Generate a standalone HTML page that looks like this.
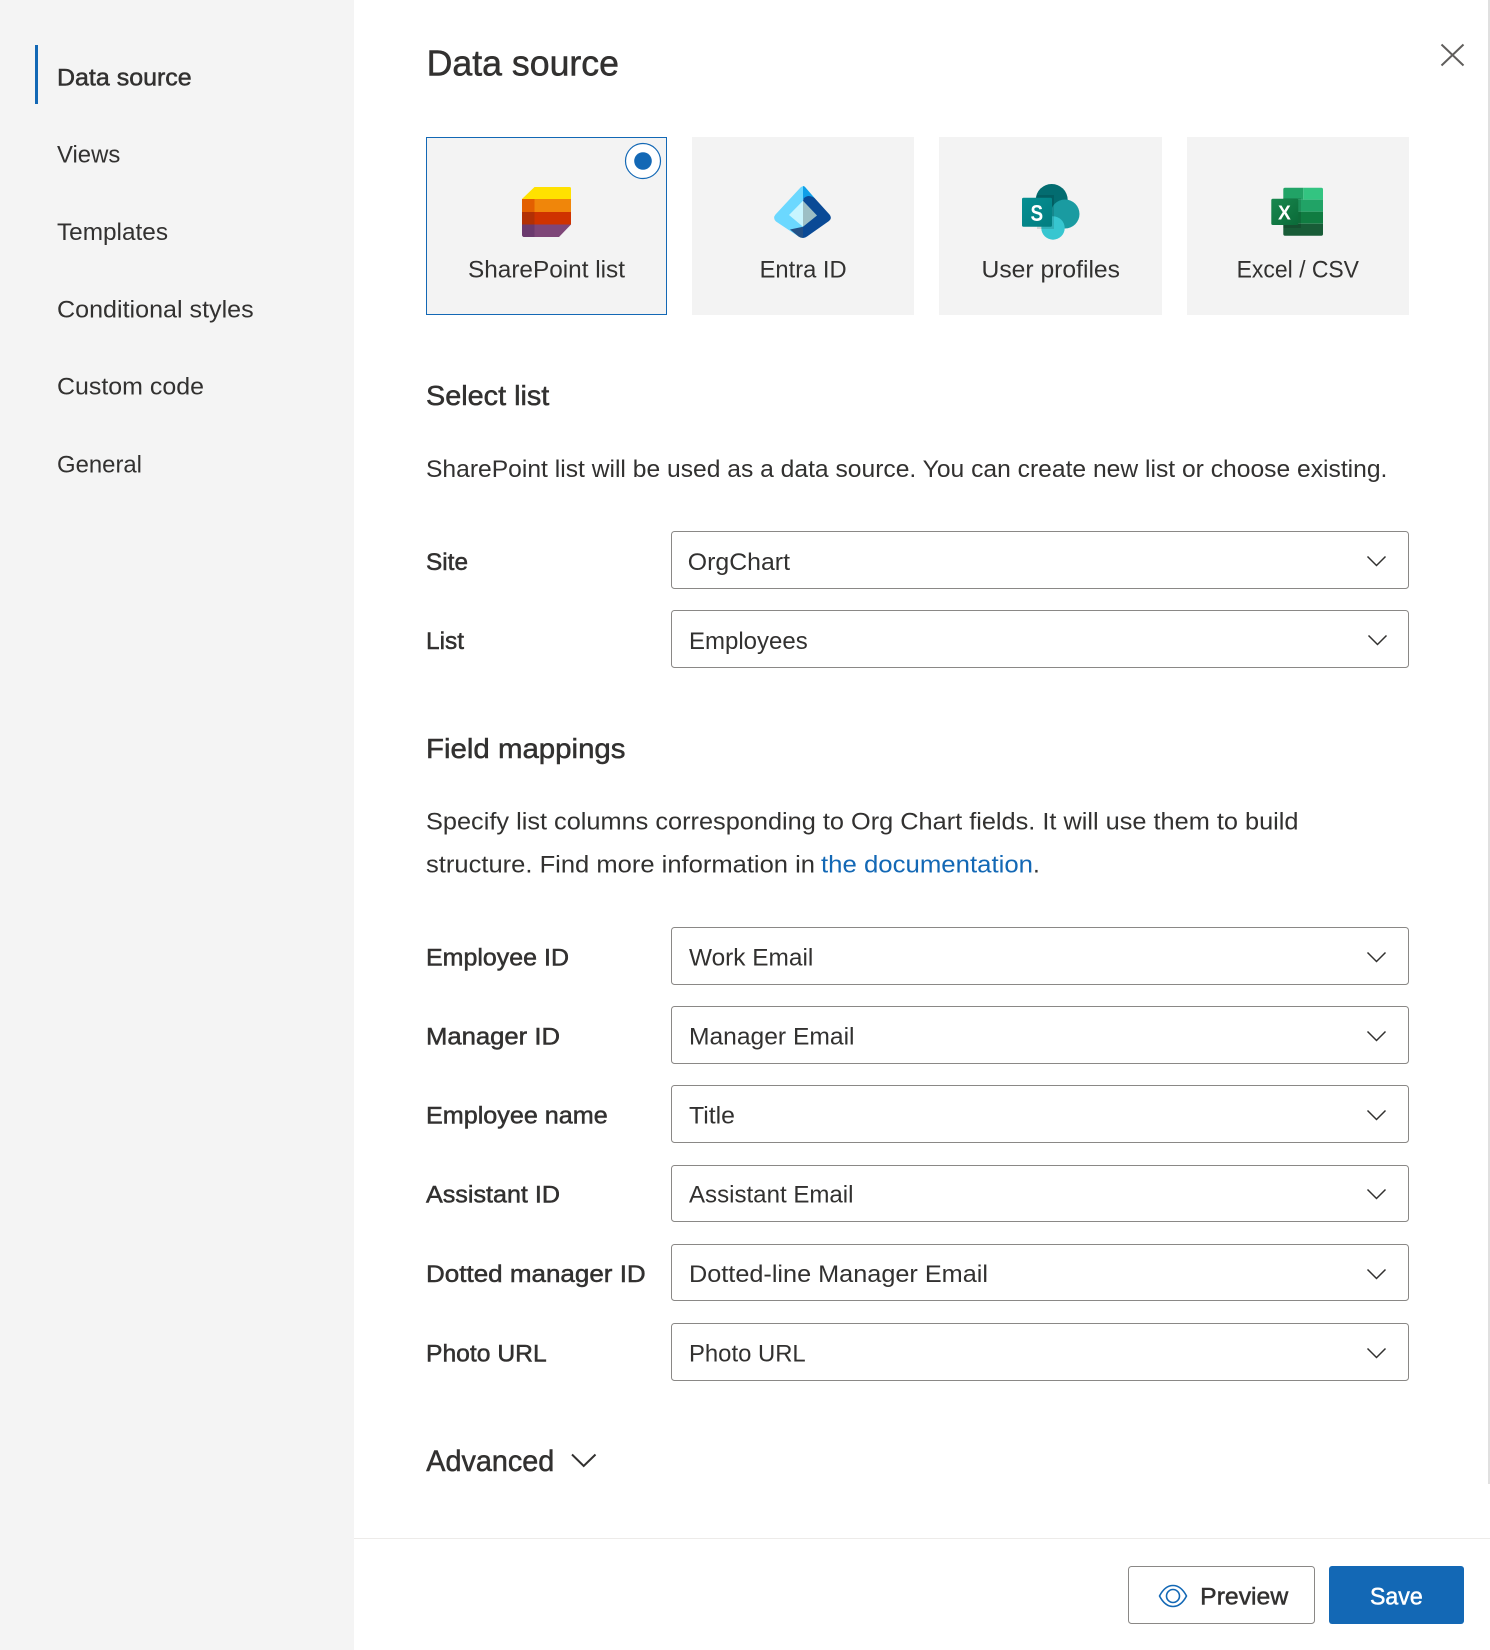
<!DOCTYPE html>
<html><head><meta charset="utf-8"><title>Data source</title>
<style>
html,body{margin:0;padding:0;background:#fff;width:1490px;height:1650px;overflow:hidden}
svg{display:block}
text{font-family:"Liberation Sans",Arial,sans-serif;fill:#323130;font-size:24.5px}
.s{stroke:#323130;stroke-width:.5px}
.h{font-size:28px;stroke:#323130;stroke-width:.5px}
.b{fill:none;stroke:#323130;stroke-width:1.5}
.d{fill:#fff;stroke:#8a8886;stroke-width:1}
</style></head><body>
<svg width="1490" height="1650" viewBox="0 0 1490 1650" xmlns="http://www.w3.org/2000/svg">
<defs>
<linearGradient id="sp" x1="0" y1="0" x2="1" y2="1"><stop offset="0" stop-color="#058f92"/><stop offset="1" stop-color="#027d80"/></linearGradient>
<linearGradient id="xl" x1="0" y1="0" x2="1" y2="1"><stop offset="0" stop-color="#18884f"/><stop offset="1" stop-color="#0b6a38"/></linearGradient>
</defs>
<rect width="1490" height="1650" fill="#fff"/>
<rect width="354" height="1650" fill="#f4f4f4"/>
<rect x="1488" y="0" width="2" height="1484" fill="#e0e0e0"/>
<rect x="35" y="45" width="3" height="59" fill="#1368b5"/>

<text class="s" x="57" y="85.6" textLength="134.7" lengthAdjust="spacingAndGlyphs">Data source</text>
<text x="57" y="162.4" textLength="63.3" lengthAdjust="spacingAndGlyphs">Views</text>
<text x="57" y="239.8" textLength="111" lengthAdjust="spacingAndGlyphs">Templates</text>
<text x="57" y="317.5" textLength="196.7" lengthAdjust="spacingAndGlyphs">Conditional styles</text>
<text x="57" y="394.7" textLength="147" lengthAdjust="spacingAndGlyphs">Custom code</text>
<text x="57" y="472.5" textLength="85" lengthAdjust="spacingAndGlyphs">General</text>

<text x="426.6" y="75.7" style="font-size:36.5px" class="s" textLength="192.4" lengthAdjust="spacingAndGlyphs">Data source</text>
<path d="M1441.5 44.5L1463.5 65.5M1463.5 44.5L1441.5 65.5" fill="none" stroke="#605e5c" stroke-width="2"/>

<!-- cards -->
<rect x="426.5" y="137.5" width="240" height="177" fill="#f3f3f3" stroke="#1368b5" stroke-width="1"/>
<rect x="692" y="137" width="222" height="178" fill="#f3f3f3"/>
<rect x="939" y="137" width="223" height="178" fill="#f3f3f3"/>
<rect x="1187" y="137" width="222" height="178" fill="#f3f3f3"/>
<circle cx="643" cy="161" r="17.5" fill="#fff" stroke="#1368b5" stroke-width="1.2"/>
<circle cx="643" cy="161" r="8.8" fill="#1368b5"/>

<!-- Lists icon -->
<path d="M522 199L534.5 187H569.5Q571 187 571 188.5V199Z" fill="#ffe100"/>
<rect x="522" y="199" width="49" height="13" fill="#f0860a"/>
<rect x="522" y="199" width="12.5" height="13" fill="#e35f00"/>
<rect x="522" y="212" width="49" height="12.5" fill="#cf3300"/>
<rect x="522" y="212" width="12.5" height="12.5" fill="#b23005"/>
<path d="M522 224.5H571L559 237H524.5Q522 237 522 234.5Z" fill="#7e4678"/>
<path d="M522 224.5H534.5V237H524.5Q522 237 522 234.5Z" fill="#6b3a6e"/>

<!-- Entra icon -->
<path d="M800.5 187.5Q803 185 805.5 187.5L803 200V238Q800.5 238 798.5 236.5L776 221.5Q772.5 218 775.5 214.5Z" fill="#6bd8ff"/>
<path d="M803 186Q804.5 186 805.5 187.5L815 198.5L806 197Q803 198 803 200Z" fill="#0f9fe8"/>
<path d="M803 201Q803 197 808 196Q812 196 815 198.5L829.5 214.5Q832.5 218 829 221L807 236.5Q805 238 803 238Z" fill="#0a4a96"/>
<path d="M790 229.5L803 226.7V238Q800.5 238 798.5 236.5Z" fill="#225086"/>
<path d="M803 200.7L789 215L803 226.7Z" fill="#c8f5ff"/>
<path d="M803 200.7L817 215.5L803 226.7Z" fill="#9dbfc5"/>

<!-- SharePoint icon -->
<circle cx="1051.7" cy="200" r="16" fill="#036c70"/>
<circle cx="1065" cy="214" r="14.5" fill="#1a9ba1"/>
<circle cx="1053" cy="228" r="11.7" fill="#37c6d0"/>
<path d="M1037 195H1054V229H1037Z" fill="#000" opacity=".12"/>
<rect x="1022" y="197.7" width="30" height="29" rx="1.5" fill="url(#sp)"/>
<text x="1030.5" y="220.8" textLength="12.6" lengthAdjust="spacingAndGlyphs" style="font-size:23px;font-weight:bold;fill:#fff">S</text>

<!-- Excel icon -->
<path d="M1285 187.7H1303.3V199.7H1283.3V189.4Q1283.3 187.7 1285 187.7Z" fill="#21a366"/>
<path d="M1303.3 187.7H1321.3Q1323 187.7 1323 189.4V199.7H1303.3Z" fill="#33c481"/>
<rect x="1283.3" y="199.7" width="39.7" height="12" fill="#21a366"/>
<rect x="1283.3" y="211.7" width="39.7" height="12" fill="#107c41"/>
<path d="M1283.3 223.7H1323V234Q1323 235.7 1321.3 235.7H1285Q1283.3 235.7 1283.3 234Z" fill="#185c37"/>
<path d="M1283.3 198H1301V228H1283.3Z" fill="#000" opacity=".12"/>
<rect x="1271.3" y="198.7" width="27" height="26.3" rx="1.5" fill="url(#xl)"/>
<text x="1278" y="219.3" textLength="12.8" lengthAdjust="spacingAndGlyphs" style="font-size:20px;font-weight:bold;fill:#fff">X</text>

<text x="468" y="277.6" textLength="157" lengthAdjust="spacingAndGlyphs">SharePoint list</text>
<text x="759.6" y="277.6" textLength="87" lengthAdjust="spacingAndGlyphs">Entra ID</text>
<text x="981.5" y="277.6" textLength="138.5" lengthAdjust="spacingAndGlyphs">User profiles</text>
<text x="1236.6" y="277.6" textLength="122.4" lengthAdjust="spacingAndGlyphs">Excel / CSV</text>

<text class="h" x="426" y="405" textLength="123.3" lengthAdjust="spacingAndGlyphs">Select list</text>
<text x="426" y="477" textLength="961.4" lengthAdjust="spacingAndGlyphs">SharePoint list will be used as a data source. You can create new list or choose existing.</text>

<text class="s" x="426" y="570" textLength="42" lengthAdjust="spacingAndGlyphs">Site</text>
<rect class="d" x="671.5" y="531.5" width="737" height="57" rx="3"/>
<text x="687.8" y="570" textLength="102.2" lengthAdjust="spacingAndGlyphs">OrgChart</text>
<path class="b" d="M1367.5 556.5L1376.5 565.5L1385.5 556.5"/>

<text class="s" x="426" y="649" textLength="38" lengthAdjust="spacingAndGlyphs">List</text>
<rect class="d" x="671.5" y="610.5" width="737" height="57" rx="3"/>
<text x="689" y="649" textLength="118.7" lengthAdjust="spacingAndGlyphs">Employees</text>
<path class="b" d="M1368.5 635.5L1377.5 644.5L1386.5 635.5"/>

<text class="h" x="426" y="758" textLength="199.5" lengthAdjust="spacingAndGlyphs">Field mappings</text>
<text x="426" y="829.5" textLength="872.5" lengthAdjust="spacingAndGlyphs">Specify list columns corresponding to Org Chart fields. It will use them to build</text>
<text x="426" y="872.5" textLength="389" lengthAdjust="spacingAndGlyphs">structure. Find more information in</text>
<text x="821" y="872.5" textLength="212" lengthAdjust="spacingAndGlyphs" style="fill:#1368b5">the documentation</text>
<text x="1033" y="872.5">.</text>

<text class="s" x="426" y="965.3" textLength="143" lengthAdjust="spacingAndGlyphs">Employee ID</text>
<rect class="d" x="671.5" y="927.5" width="737" height="57" rx="3"/>
<text x="689" y="965.3" textLength="124.3" lengthAdjust="spacingAndGlyphs">Work Email</text>
<path class="b" d="M1367.5 952.5L1376.5 961.5L1385.5 952.5"/>

<text class="s" x="426" y="1044.3" textLength="134" lengthAdjust="spacingAndGlyphs">Manager ID</text>
<rect class="d" x="671.5" y="1006.5" width="737" height="57" rx="3"/>
<text x="689" y="1044.3" textLength="165.5" lengthAdjust="spacingAndGlyphs">Manager Email</text>
<path class="b" d="M1367.5 1031.5L1376.5 1040.5L1385.5 1031.5"/>

<text class="s" x="426" y="1123.3" textLength="181.7" lengthAdjust="spacingAndGlyphs">Employee name</text>
<rect class="d" x="671.5" y="1085.5" width="737" height="57" rx="3"/>
<text x="689" y="1123.3" textLength="46" lengthAdjust="spacingAndGlyphs">Title</text>
<path class="b" d="M1367.5 1110.5L1376.5 1119.5L1385.5 1110.5"/>

<text class="s" x="426" y="1202.3" textLength="134" lengthAdjust="spacingAndGlyphs">Assistant ID</text>
<rect class="d" x="671.5" y="1165.5" width="737" height="56" rx="3"/>
<text x="689" y="1202.3" textLength="164.5" lengthAdjust="spacingAndGlyphs">Assistant Email</text>
<path class="b" d="M1367.5 1189.5L1376.5 1198.5L1385.5 1189.5"/>

<text class="s" x="426" y="1282" textLength="219.7" lengthAdjust="spacingAndGlyphs">Dotted manager ID</text>
<rect class="d" x="671.5" y="1244.5" width="737" height="56" rx="3"/>
<text x="689" y="1282" textLength="299" lengthAdjust="spacingAndGlyphs">Dotted-line Manager Email</text>
<path class="b" d="M1367.5 1269.5L1376.5 1278.5L1385.5 1269.5"/>

<text class="s" x="426" y="1361.3" textLength="120.7" lengthAdjust="spacingAndGlyphs">Photo URL</text>
<rect class="d" x="671.5" y="1323.5" width="737" height="57" rx="3"/>
<text x="689" y="1361.3" textLength="116.7" lengthAdjust="spacingAndGlyphs">Photo URL</text>
<path class="b" d="M1367.5 1348.5L1376.5 1357.5L1385.5 1348.5"/>

<text class="h" x="426.3" y="1471" style="font-size:29.5px" textLength="128" lengthAdjust="spacingAndGlyphs">Advanced</text>
<path d="M572 1454.5L583.7 1466L595.5 1454.5" fill="none" stroke="#323130" stroke-width="2"/>

<!-- footer -->
<rect x="354" y="1538" width="1136" height="1" fill="#edebe9"/>
<rect x="1128.5" y="1566.5" width="186" height="57" rx="3" fill="#fff" stroke="#8a8886" stroke-width="1"/>
<path d="M1159.5 1596Q1165 1585.5 1173 1585.5Q1181 1585.5 1186.5 1596Q1181 1606.5 1173 1606.5Q1165 1606.5 1159.5 1596Z" fill="none" stroke="#1368b5" stroke-width="1.6" stroke-linejoin="round"/>
<circle cx="1173" cy="1596" r="6.5" fill="none" stroke="#1368b5" stroke-width="1.6"/>
<text class="s" x="1200.2" y="1604.6" textLength="88" lengthAdjust="spacingAndGlyphs">Preview</text>
<rect x="1329" y="1566" width="135" height="58" rx="3" fill="#1368b5"/>
<text x="1370" y="1604.6" textLength="52.7" lengthAdjust="spacingAndGlyphs" style="fill:#fff;stroke:#fff;stroke-width:.5px">Save</text>
</svg>
</body></html>
